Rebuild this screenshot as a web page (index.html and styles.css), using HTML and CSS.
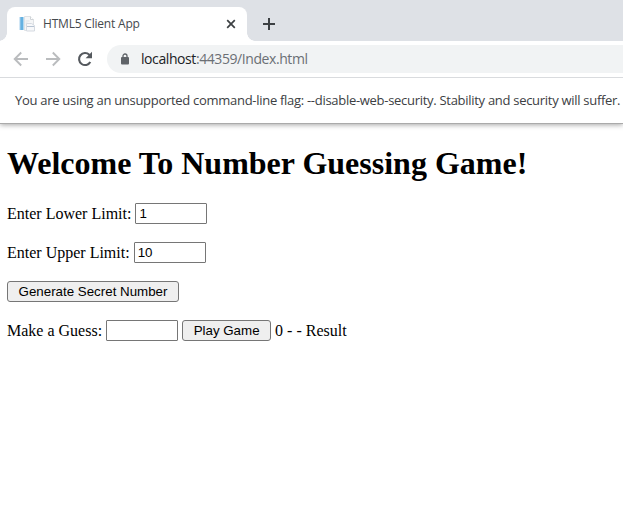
FILE: index.html
```html
<!DOCTYPE html>
<html lang="en">
<head>
<meta charset="utf-8">
<title>HTML5 Client App</title>
<link rel="stylesheet" href="styles.css">
</head>
<body>
<div class="tabstrip">
  <div class="tab">
    <svg class="favicon" width="17" height="16" viewBox="0 0 17 16">
      <path d="M5.500 .5h6l3 3v11h-9z" fill="#f5f6f7" stroke="#dfe2e5"/>
      <path d="M11.500 .5v3h3" fill="#fff" stroke="#d0d4d8"/>
      <path d="M1 1h3.500v13H1z" fill="#64b1e1"/>
      <path d="M.5 1h1v13h-1z" fill="#a5d0ed"/>
      <path d="M6.500 5h4M6.500 7h2M6.500 9h1" stroke="#dfe3e8"/>
      <path d="M7.500 7.500h5l3 2v5.500h-8z" fill="#f7f8fa" stroke="#d5dae1"/>
      <path d="M8 10.500h7" stroke="#b6c3d3"/>
    </svg>
    <span class="tab-title">HTML5 Client App</span>
    <svg class="close" width="10" height="10" viewBox="0 0 10 10"><path d="M1.200 1.200l7.600 7.600M8.800 1.200l-7.600 7.600" stroke="#3c4043" stroke-width="1.700"/></svg>
  </div>
  <svg class="plus" width="12" height="12" viewBox="0 0 12 12"><path d="M6 0v12M0 6h12" stroke="#3c4043" stroke-width="2"/></svg>
</div>
<div class="toolbar">
  <svg class="nav" width="16" height="16" viewBox="0 0 16 16"><path d="M15 8H2M8.200 1.500L1.700 8l6.500 6.500" fill="none" stroke="#babcbe" stroke-width="1.900"/></svg>
  <svg class="nav" width="16" height="16" viewBox="0 0 16 16"><path d="M1 8h13M7.800 1.500L14.300 8l-6.500 6.500" fill="none" stroke="#babcbe" stroke-width="1.900"/></svg>
  <svg class="nav" width="16" height="16" viewBox="0 0 16 16"><path d="M13.300 11A6 6 0 1 1 12.300 3.800L13.500 5" fill="none" stroke="#55595e" stroke-width="2.100"/><path d="M15 .8v6.400H8.600z" fill="#55595e"/></svg>
  <div class="omnibox">
    <svg width="8" height="12" viewBox="0 0 8 12"><path d="M2 5V3a2 2 0 0 1 4 0v2" fill="none" stroke="#5f6368" stroke-width="1.300"/><rect y="4" width="8" height="7.500" rx="1" fill="#5f6368"/></svg>
    <span class="url"><span class="host">localhost</span>:44359/Index.html</span>
  </div>
</div>
<div class="infobar"><span>You are using an unsupported command-line flag: --disable-web-security. Stability and security will suffer.</span></div>
<main class="page">
  <h1>Welcome To Number Guessing Game!</h1>
  <div class="row">Enter Lower Limit: <input class="num" value="1"></div>
  <div class="row">Enter Upper Limit: <input class="num" value="10"></div>
  <div class="row"><button class="generate">Generate Secret Number</button></div>
  <div class="row">Make a Guess: <input class="num"> <button class="play">Play Game</button> 0 - - Result</div>
</main>
</body>
</html>
```
FILE: styles.css
```css
* { box-sizing: border-box; }
body { margin: 0; height: 510px; overflow: hidden; background: #fff; }
svg { display: block; flex: none; }
.tabstrip { height: 41px; background: #dee1e6; display: flex; align-items: flex-end; padding-left: 7px; }
.tab {
  position: relative; width: 240px; height: 34px; background: #fff;
  border-radius: 8px 8px 0 0; display: flex; align-items: center; padding: 0 11px 0 12px;
}
.tab::before, .tab::after { content: ""; position: absolute; bottom: 0; width: 8px; height: 8px; }
.tab::before { left: -8px; background: radial-gradient(circle at 0 0, transparent 7.500px, #fff 8px); }
.tab::after { right: -8px; background: radial-gradient(circle at 100% 0, transparent 7.500px, #fff 8px); }
.tab-title { margin-left: 7px; font: 12px/16px "Open Sans", sans-serif; letter-spacing: -0.200px; color: #45494d; white-space: nowrap; }
.close { margin-left: auto; }
.plus { margin: 0 0 11px 16px; }
.toolbar { height: 37px; border-bottom: 1px solid #d9dbde; display: flex; align-items: center; padding-left: 13px; gap: 16px; }
.omnibox {
  flex: 1; height: 28px; margin-left: -2px; background: #f1f3f4; border-radius: 14px 0 0 14px;
  display: flex; align-items: center; padding-left: 14px; gap: 12px;
}
.url { font: 14px/20px "Open Sans", sans-serif; letter-spacing: -0.420px; color: #6b6f74; white-space: nowrap; }
.host { color: #202124; }
.infobar {
  height: 46px; border-bottom: 1px solid #aaa; box-shadow: 0 1px 5px rgba(0,0,0,.35);
  padding: 0 0 2px 15px; display: flex; align-items: center; clip-path: inset(0 0 -8px 0);
  font: 13px/18px "Open Sans", sans-serif; letter-spacing: -0.290px; color: #3c4043; white-space: nowrap;
}
.page { padding: 20px 7px 0; font: 16px/18px "Liberation Serif", serif; color: #000; }
h1 { margin: 0 0 20px; font-size: 32px; line-height: 39px; white-space: nowrap; }
.row { height: 21px; margin-bottom: 18px; line-height: 21px; white-space: nowrap; }
.num, button { height: 21px; font: 13.333px/15px "Liberation Sans", sans-serif; border: 1px solid #767676; color: #000; vertical-align: top; margin: 0; }
.num { width: 72px; padding: 1px 3px; border-radius: 1px; background: #fff; }
button { background: #efefef; border-radius: 3px; padding: 0; }
.generate { width: 172px; }
.play { width: 89px; }
```
